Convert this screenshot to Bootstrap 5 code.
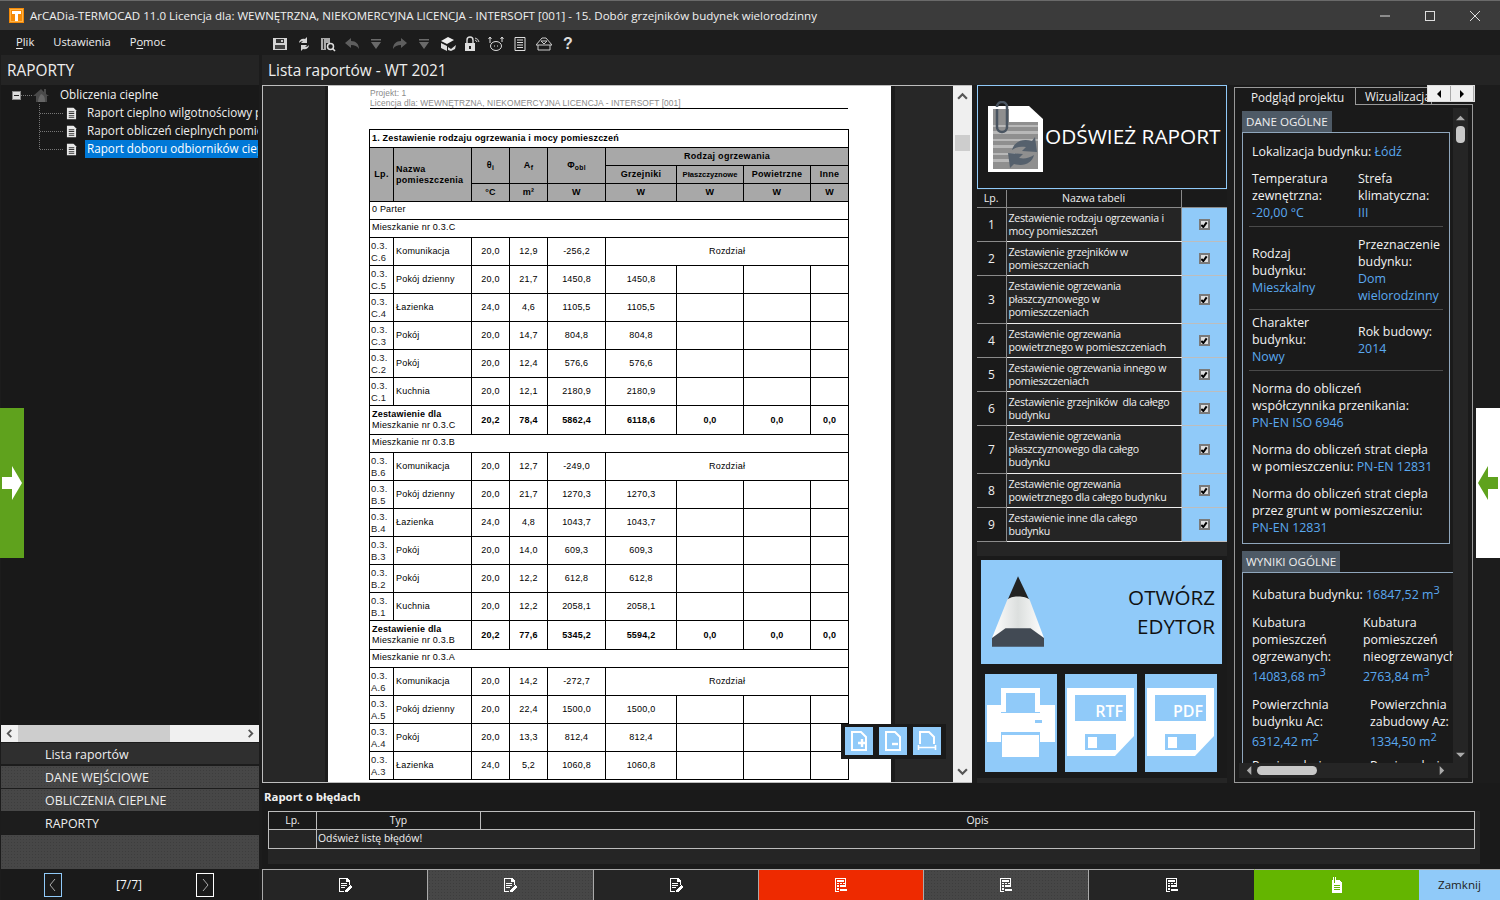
<!DOCTYPE html>
<html lang="pl">
<head>
<meta charset="utf-8">
<title>ArCADia-TERMOCAD</title>
<link href="https://cdn.jsdelivr.net/npm/bootstrap@5.3.0/dist/css/bootstrap.min.css" rel="stylesheet">
<style>
html,body{margin:0;height:100%;overflow:hidden;background:#1a1a1a}
body{font-family:"Open Sans","Noto Sans",sans-serif;font-size:12px;color:#f2f2f2}
.app{width:1500px;height:900px;background:#1c1c1c}
.ttl{height:30px;background:#3b3b3b;border-top:1px solid #6a6a6a;padding-right:3px}
.ttl-txt{margin-left:6px;font-size:11.56px;color:#f0f0f0}
.logo{width:15px;height:15px;margin-left:9px}
.winbtn{width:45px;height:29px}
.mnu{height:25px;background:#1c1c1c}
.mnu-items{width:268px;padding-left:16px;gap:19px;font-size:11.2px;color:#eee}
.mnu-items u{text-underline-offset:2px}
.tool-bar{padding-top:2px}
.tool-i{width:24px;height:24px}
.tool-i svg{width:16px;height:16px}
.qmark{font:700 16px "Liberation Sans",sans-serif;color:#ddd}
.lft{width:259px;padding-left:1px}
.lft>*{flex:none}
.sect-h{height:30px;font-size:15.4px;background:#242424;padding:1px 0 0 6px;color:#eee}
.main-h{height:30px;font-size:15.4px;background:#242424;padding:1px 0 0 6px;color:#eee}
.tree{height:640px;background:#191919;padding-top:1px;font-size:11.7px;overflow:hidden}
.tree-row{height:18px;white-space:nowrap;position:relative}
.tree-exp{width:9px;height:9px;background:#ddd;border:1px solid #888;margin-left:11px;position:relative;flex:none}
.tree-exp::after{content:"";position:absolute;left:1px;right:1px;top:3px;height:1px;background:#222}
.tree-dots{width:11px;border-top:1px dotted #777;flex:none}
.tree-home{width:18px;height:16px;flex:none;margin-right:10px}
.tree-kids{margin:0 0 0 38px;padding:0;list-style:none;border-left:1px dotted #777;height:45px;overflow:visible}
.tree-kid{height:18px;width:218px;white-space:nowrap;overflow:hidden}
.tree-kid .tree-dots{width:23px}
.tree-doc{width:11px;height:13px;flex:none;margin:0 8px 0 3px}
.tree-lbl{padding:0 2px;height:18px;line-height:17px;flex-grow:1;overflow:hidden;color:#eee}
.tree-sel{background:#0078d7;color:#fff}
.hsc{height:17px;background:#f0f0f0;color:#555}
.hsc-th{width:152px;height:17px;background:#cdcdcd;margin-left:17px}
.hsc svg{width:9px;height:9px;flex:none}
.acc{height:23px;padding:2px 0 0 44px;font-size:12.4px;color:#eee}
.acc1{background:#2f2f2f;margin-top:1px;height:21px;margin-bottom:2px;padding-top:3px}
.acc-g{height:22px;margin-bottom:1px}
.tex{background-color:#474747;background-image:radial-gradient(#3d3d3d 30%,transparent 35%);background-size:3px 3px}
.acc3{background:#1d1d1d;height:22px;margin-bottom:1px}
.acc-rest{height:34px}
.pager{height:31px;font-size:12px;padding-left:43px;padding-right:45px;background:#1a1a1a}
.pg-b{width:18px;height:24px;border:1px solid #fff;padding:0;background:none;border-radius:0}
.pg-prev{border-color:#90caf9}
.mainc{width:1238px;margin-left:3px}
.mainc>*{flex:none}
.wrk{height:698px}
.view{width:710px;background:#272727;border:solid #bdbdbd;border-width:1px 0 1px 1px}
.gut1{width:65px;flex:none;border-right:3px solid #1c1c1c;background:#272727}
.gut2{width:62px;flex:none;border-left:4px solid #1c1c1c;background:#272727}
.page{width:563px;flex:none;background:#fff;color:#000;padding:2px 0 0 42px;overflow:hidden;font-family:"Liberation Sans",sans-serif;font-size:9px}
.pg-h{width:478px;height:21px;border-bottom:1px solid #000;color:#8a8a8a;font-size:8.4px;line-height:10px;letter-spacing:.1px;margin-bottom:20px;white-space:nowrap}
.rpt{width:479px;table-layout:fixed;border-collapse:collapse;font-size:9px;letter-spacing:.2px;line-height:11px;margin:0 0 0 -1px;--bs-table-bg:#fff;--bs-table-color:#000;--bs-table-border-color:#000}
.rpt td,.rpt th{padding:0 2px;border:1px solid #000;height:18px;vertical-align:middle;font-weight:400;background:#fff;color:#000;overflow:hidden}
.rpt .gh{background:#a8a8a8;text-align:center;font-weight:700;letter-spacing:.3px}
.rpt .gh-l{text-align:left}
.rpt .t1{font-weight:700;letter-spacing:.2px}
.rpt td.lbl{padding-bottom:3px}
.rpt .rr td{height:28px;text-align:center}
.rpt .rr td:nth-child(1),.rpt .rr td:nth-child(2){text-align:left}
.rpt .rr td:nth-child(1){font-size:9.4px;line-height:12px;color:#222;padding:0 1px}
.rpt .sm td{height:29px;font-weight:700}
.rpt .sm td:nth-child(2){text-align:center}
.rpt .sm td.lab{line-height:11px;padding:0 2px;font-size:9px;color:#000}
.rpt .sm .lab span{font-weight:400;display:block}
.rpt .tiny{font-size:7.6px;letter-spacing:0;padding:0}
.c1{width:24px}.c2{width:78px}.c3,.c4{width:38px}.c5{width:58px}.c6{width:71px}.c7,.c8{width:67px}.c9{width:38px}
.vsc{width:19px;flex:none;background:#efefef;color:#555}
.vsc svg{width:11px;height:11px;margin:5px auto;display:block;flex:none}
.vsc-th{height:16px;margin:28px 2px 0;background:#cdcdcd;flex:none}
.float{left:578px;top:638px;width:105px;height:35px;background:#1a1a1a;padding:3px 5px 4px 4px;gap:6px}
.float .fb{width:28px;height:28px;background:#90caf9;padding:0;border:0;border-radius:0}
.float svg{width:20px;height:20px}
.mid{width:250px;margin-left:5px;background:#252525}
.mid>*{flex:none}
.refr{height:104px;background:#1a1a1a;border:1px solid #90caf9;border-radius:0;color:#fff;padding:0 0 0 10px;font-size:20.8px;white-space:nowrap;gap:1px;margin-bottom:1px}
.refr svg{width:56px;height:71px;flex:none;margin-top:-1px}
.tb{width:250px;table-layout:fixed;border-collapse:collapse;margin:0;font-size:10.6px;letter-spacing:-.25px;line-height:13px;--bs-table-bg:#252525;--bs-table-color:#f0f0f0}
.tb td,.tb th{padding:1px 2px 0;border:1px solid #bdbdbd;background:#252525;color:#f0f0f0;font-weight:400;vertical-align:middle}
.tb th{background:#1a1a1a;text-align:center;height:17px;border-color:#8a8a8a;border-top:0;letter-spacing:0}
.tb td.n{text-align:center;background:#1a1a1a;font-size:12px;border-color:#8a8a8a}
.tb td.k{background:#90caf9;text-align:center;padding:0}
.tb td.nm{border-color:#eee #8a8a8a}
.tb tbody tr{height:34px}
.tb tbody tr.r3{height:48px}
.tb th:first-child,.tb td:first-child{border-left:0}
.tb th:last-child,.tb td:last-child{border-right:0}
.m1{width:29px}.m2{width:175px}.m3{width:46px}
.ck{width:11px;height:11px;margin:4px 0 0;background:#dedede url("data:image/svg+xml,%3Csvg xmlns='http://www.w3.org/2000/svg' viewBox='0 0 12 12'%3E%3Cpath d='M2 6l3 3 5-7' fill='none' stroke='%23000' stroke-width='3'/%3E%3C/svg%3E") center/8px no-repeat;border:2px solid #7a7a7a;border-radius:0;appearance:none;display:inline-block;box-sizing:border-box}
.opn{height:222px;margin-top:14px;background:#1a1a1a;padding:4px 5px 6px 4px}
.opn-e{height:104px;background:#90caf9;border:0;border-radius:0;color:#111;font-size:20.6px;line-height:29px;padding:0 7px 0 11px;width:241px;text-align:right}
.opn-e svg{width:52px;height:72px;flex:none}
.opn-s{margin-top:10px;gap:8px;padding-left:4px}
.opn-b{width:72px;height:98px;background:#90caf9;border:0;border-radius:0;padding:0}
.opn-b svg{width:72px;height:70px}
.rgt{width:239px;margin-left:7px;position:relative;background:#1a1a1a}
.tabsr{height:19px;margin:0;padding:0;border:0;flex-wrap:nowrap}
.tabsr .nav-link{font-size:11.7px;color:#f0f0f0;padding:0 0 0 16px;border:1px solid #999;border-bottom:0;border-radius:0;height:18px;width:122px;text-align:left;background:#1a1a1a;line-height:14px;white-space:nowrap;margin:2px 0 0;position:relative;z-index:1}
.tabsr .nav-link.active{color:#f0f0f0;background:#1a1a1a;border-color:#999}
.tabsr .nav-item:last-child .nav-link{width:76px;padding-left:9px;height:17px;border-left:0}
.tab-arr{right:-2px;top:0;width:48px;height:17px;background:#f0f0f0;color:#000;border:1px solid #ddd;z-index:2}
.tab-arr svg{width:8px;height:8px}
.tab-arr span{flex:1 1 0;height:100%;border-right:1px solid #aaa}
.rbox{height:679px;border:1px solid #999;padding:3px 4px 4px 4px}
.rin{height:670px;overflow:hidden;background:#252525}
.rtop{height:655px}
.rsc{flex:none;width:214px;overflow:hidden;background:#1a1a1a;padding:3px 0 0 3px;font-size:12.4px;line-height:17px;color:#f2f2f2;white-space:nowrap}
.bl{color:#5aa9f0}
.tagg{background:#4e5a66;display:inline-block;padding:0 4px;height:21px;line-height:21px;font-size:11.6px;color:#eee;vertical-align:top}
.gbox{width:208px;height:412px;border:1px solid #8fa6bc;padding:10px 6px 0 9px;margin-bottom:7px}
.gbox2{width:220px;height:200px;border:1px solid #8fa6bc;border-right:0;padding:13px 0 0 9px}
.gbox2 sup{font-size:11px;top:-.5em;line-height:0}
.sl{display:block;margin-top:3px}
.gc{width:106px;flex:none}
.gc2{width:111px;flex:none}
.gc3{width:118px;flex:none}
.gsep{border-top:1px solid #4a4a4a;margin:5px 0 0 -3px;width:194px}
.g4{margin-top:4px}.g7{margin-top:7px}.g9{margin-top:9px}.g10{margin-top:10px}.g11{margin-top:11px}
.rvs{width:15px;flex:none;background:#252525;color:#aaa}
.rvs svg{width:9px;height:9px;margin:6px auto 0;display:block;flex:none}
.rvs-th{width:9px;height:17px;background:#c8c8c8;border-radius:4px;margin:3px auto 0;flex:none}
.rhs{height:15px;background:#252525;padding:0 6px;color:#aaa}
.rhs svg{width:9px;height:9px;flex:none}
.rhs-th{width:60px;height:9px;border-radius:5px;background:#c8c8c8;margin-left:3px;flex:none}
.err{height:86px;background:#1a1a1a;padding:7px 0 0 2px;width:1238px}
.err-t{font-size:11.4px;font-weight:700;height:21px;line-height:14px;color:#f0f0f0}
.err-b{background:#252525;margin-left:4px;width:1212px;height:53px;padding:0}
.et{width:1207px;table-layout:fixed;border-collapse:collapse;font-size:10.4px;margin:0;--bs-table-bg:#1a1a1a;--bs-table-color:#f0f0f0}
.et th,.et td{padding:0 1px;border:1px solid #bdbdbd;height:18px;font-weight:400;text-align:center;background:#1a1a1a;color:#f0f0f0;vertical-align:middle}
.et td{text-align:left;height:19px;background:#252525}
.e1{width:48px}.e2{width:164px}
.tabs{height:31px;background:#1a1a1a}
.tb-i{height:31px;flex:1 1 0;border:solid #aaa;border-width:1px 0 0 1px;border-radius:0;padding:0;background:#252525;color:#fff}
.tb-i svg{width:16px;height:16px;shape-rendering:crispEdges}
.tb-i.tex{background-color:#474747;background-image:radial-gradient(#3d3d3d 30%,transparent 35%);background-size:3px 3px}
.tb-r{background:#ee2a00}
.tb-n{background:#64b500;border-left-color:#64b500}
.tb-z{width:81px;background:#90caf9;color:#222;font-size:11.6px;border:0;border-top:1px solid #aaa;border-radius:0;padding:0;flex:none}
.side{position:absolute;top:408px;width:24px;height:150px}
.side-l{left:0;background:#5fa21d}
.side-r{right:0;background:#fff}
.side svg{width:20px;height:34px}
</style>
</head>
<body>
<svg width="0" height="0" class="position-absolute">
<defs>
<symbol id="i-pen-doc" viewBox="0 0 16 16"><path d="M2 1h8l3 3v4h-1V5H9V2H3v12h4v1H2z" fill="#fff"/><path d="M4 6h6v1H4zM4 8h6v1H4zM4 10h4v1H4z" fill="#fff"/><path d="M8 13l5-5 2 2-5 5H8z" fill="#fff"/></symbol>
<symbol id="i-calc" viewBox="0 0 16 16"><path d="M2 1h11v7h-1V2H3v12h3v1H2z" fill="#fff"/><path d="M4 3h7v2H4zM4 6h2v1H4zM7 6h2v1H7zM10 6h2v1h-2zM4 8h2v2H4zM4 11h2v2H4z" fill="#fff"/><path d="M7 8h5l1 1-1 1H7zM7 12h6l2 1-2 1H7z" fill="#fff"/></symbol>
<symbol id="i-clip" viewBox="0 0 16 16"><path d="M3 3h1V0h3v3h3l3 3v10H3z" fill="#fff"/><path d="M5 0v6h1V0z" fill="#64b500"/><path d="M5 8h6v1H5zM5 10h6v1H5zM5 12h6v1H5z" fill="#64b500"/></symbol>
<symbol id="i-tdoc" viewBox="0 0 12 13"><path d="M1 0h7l3 3v10H1z" fill="#e8e8e8"/><path d="M3 4h6v1H3zM3 6h6v1H3zM3 8h6v1H3zM3 10h6v1H3z" fill="#333"/></symbol>
</defs>
</svg>
<div class="app position-relative d-flex flex-column">
  <header class="ttl d-flex align-items-center flex-shrink-0">
    <svg class="logo" viewBox="0 0 15 15"><rect width="15" height="15" fill="#f58a07"/><rect x="1.5" y="1.5" width="12" height="12" fill="none" stroke="#ffb347"/><path d="M3 3h9v3H9v7H6V6H3z" fill="#fff"/></svg>
    <span class="ttl-txt flex-grow-1">ArCADia-TERMOCAD 11.0 Licencja dla: WEWNĘTRZNA, NIEKOMERCYJNA LICENCJA - INTERSOFT [001] - 15. Dobór grzejników budynek wielorodzinny</span>
    <span class="winbtn d-flex align-items-center justify-content-center"><svg width="12" height="12"><path d="M1 6h10" stroke="#ddd"/></svg></span>
    <span class="winbtn d-flex align-items-center justify-content-center"><svg width="12" height="12"><rect x="1.5" y="1.5" width="9" height="9" fill="none" stroke="#ddd"/></svg></span>
    <span class="winbtn d-flex align-items-center justify-content-center"><svg width="12" height="12"><path d="M1 1l10 10M11 1L1 11" stroke="#ddd"/></svg></span>
  </header>
  <div class="mnu d-flex align-items-center flex-shrink-0">
    <div class="mnu-items d-flex">
      <span><u>P</u>lik</span><span>Ustawienia</span><span>P<u>o</u>moc</span>
    </div>
    <div class="tool-bar d-flex align-items-center">
      <span class="tool-i d-flex align-items-center justify-content-center"><svg viewBox="0 0 16 16"><path d="M1 2h14v12H1z" fill="#d4d4d4"/><path d="M4 3h8v4H4z" fill="#333"/><path d="M3 9h10v4H3z" fill="#444"/><path d="M9 4h2v2H9z" fill="#ccc"/></svg></span>
      <span class="tool-i d-flex align-items-center justify-content-center"><svg viewBox="0 0 16 16"><path d="M3 7c0-3 3-5 6-4l2-2v6H5l2-2c-2 0-3 1-4 2zM13 9c0 3-3 5-6 4l-2 2V9h6l-2 2c2 0 3-1 4-2z" fill="#d4d4d4"/></svg></span>
      <span class="tool-i d-flex align-items-center justify-content-center"><svg viewBox="0 0 16 16"><path d="M1 2h9v5H6v7H1z" fill="#aaa"/><path d="M3 3h1v10H3z" fill="#333"/><circle cx="10.500" cy="10.500" r="3" fill="none" stroke="#ddd" stroke-width="1.5"/><path d="M12.500 12.500l2.500 2.500" stroke="#ddd" stroke-width="1.6"/></svg></span>
      <span class="tool-i d-flex align-items-center justify-content-center"><svg viewBox="0 0 16 16"><path d="M1 7l6-5v3c5 0 8 3 8 8-2-3-4-4-8-4v3z" fill="#5e5e5e"/></svg></span>
      <span class="tool-i d-flex align-items-center justify-content-center"><svg viewBox="0 0 16 16"><path d="M3 3h10v1.500H3zM3 6h10l-5 7z" fill="#6a6a6a"/></svg></span>
      <span class="tool-i d-flex align-items-center justify-content-center"><svg viewBox="0 0 16 16"><path d="M15 7L9 2v3c-5 0-8 3-8 8 2-3 4-4 8-4v3z" fill="#5e5e5e"/></svg></span>
      <span class="tool-i d-flex align-items-center justify-content-center"><svg viewBox="0 0 16 16"><path d="M3 3h10v1.500H3zM3 6h10l-5 7z" fill="#6a6a6a"/></svg></span>
      <span class="tool-i d-flex align-items-center justify-content-center"><svg viewBox="0 0 16 16"><path d="M1 5l7-4 6 3-7 4z" fill="#eee"/><path d="M1 7l6 3v5l-6-3z" fill="#ddd"/><path d="M8 11l3 2 5-4-1 4-4 2-3-1z" fill="#ddd"/></svg></span>
      <span class="tool-i d-flex align-items-center justify-content-center"><svg viewBox="0 0 16 16"><path d="M3 7V4a3 3 0 0 1 6 0v3" fill="none" stroke="#ddd" stroke-width="1.4"/><path d="M1 7h10v8H1z" fill="#ddd"/><path d="M5 10h2v3H5z" fill="#222"/><path d="M11 2a5 5 0 0 1 4 4M11 4a3 3 0 0 1 2 2" fill="none" stroke="#ccc"/></svg></span>
      <span class="tool-i d-flex align-items-center justify-content-center"><svg viewBox="0 0 16 16"><ellipse cx="8" cy="10" rx="5.500" ry="4.500" fill="none" stroke="#ddd"/><path d="M6 10h1M9 10h1M2 1v6M2 1L.5 3M2 1l1.500 2M14 1v5M14 1l-1.500 2M14 1l1.500 2" stroke="#ddd"/></svg></span>
      <span class="tool-i d-flex align-items-center justify-content-center"><svg viewBox="0 0 16 16"><path d="M3 1.500h10v13H3zM5 4h6M5 6.500h6M5 9h6M5 11.500h6M6 1v1M10 1v1" fill="none" stroke="#ddd"/></svg></span>
      <span class="tool-i d-flex align-items-center justify-content-center"><svg viewBox="0 0 16 16"><path d="M0 9l6-7h4l6 7zM2 9v5h12V9M5 5h6l-3 3z" fill="none" stroke="#ccc"/></svg></span>
      <span class="tool-i d-flex align-items-center justify-content-center qmark">?</span>
    </div>
  </div>

  <div class="d-flex flex-grow-1 overflow-hidden">
    <aside class="lft d-flex flex-column flex-shrink-0">
      <div class="sect-h d-flex align-items-center">RAPORTY</div>
      <div class="tree">
        <div class="tree-row d-flex align-items-center">
          <span class="tree-exp"></span><span class="tree-dots"></span>
          <svg class="tree-home" viewBox="0 0 18 16"><path d="M1 9l8-7 3 3V2h2v5l3 2-2 0v6H4V9z" fill="#4a4a4a"/><path d="M9 7c3 1 4 3 4 8H6c0-3 1-5 3-8z" fill="#666"/></svg>
          <span>Obliczenia cieplne</span>
        </div>
        <ul class="tree-kids">
          <li class="tree-kid d-flex align-items-center"><span class="tree-dots"></span><svg class="tree-doc" viewBox="0 0 12 13"><use href="#i-tdoc"/></svg><span class="tree-lbl">Raport cieplno wilgotnościowy przegród</span></li>
          <li class="tree-kid d-flex align-items-center"><span class="tree-dots"></span><svg class="tree-doc" viewBox="0 0 12 13"><use href="#i-tdoc"/></svg><span class="tree-lbl">Raport obliczeń cieplnych pomieszczeń</span></li>
          <li class="tree-kid d-flex align-items-center"><span class="tree-dots"></span><svg class="tree-doc" viewBox="0 0 12 13"><use href="#i-tdoc"/></svg><span class="tree-lbl tree-sel">Raport doboru odbiorników ciepła</span></li>
        </ul>
      </div>
      <div class="hsc d-flex align-items-center position-relative">
        <span class="hsc-th"></span>
        <svg class="position-absolute start-0 ms-1" viewBox="0 0 10 10"><path d="M7 1L3 5l4 4" fill="none" stroke="#555" stroke-width="2"/></svg>
        <svg class="position-absolute end-0 me-1" viewBox="0 0 10 10"><path d="M3 1l4 4-4 4" fill="none" stroke="#555" stroke-width="2"/></svg>
      </div>
      <div class="acc acc1 d-flex align-items-center">Lista raportów</div>
      <div class="acc acc-g tex d-flex align-items-center">DANE WEJŚCIOWE</div>
      <div class="acc acc-g tex d-flex align-items-center">OBLICZENIA CIEPLNE</div>
      <div class="acc acc3 d-flex align-items-center">RAPORTY</div>
      <div class="acc-rest tex"></div>
      <div class="pager d-flex align-items-center justify-content-between">
        <button class="btn pg-b pg-prev d-flex align-items-center justify-content-center"><svg width="8" height="14" viewBox="0 0 8 14"><path d="M6 1L1 7l5 6" fill="none" stroke="#aaa"/></svg></button>
        <span class="text-light">[7/7]</span>
        <button class="btn pg-b d-flex align-items-center justify-content-center"><svg width="8" height="14" viewBox="0 0 8 14"><path d="M2 1l5 6-5 6" fill="none" stroke="#aaa"/></svg></button>
      </div>
    </aside>

    <main class="mainc d-flex flex-column flex-shrink-0">
      <div class="main-h d-flex align-items-center">Lista raportów - WT 2021</div>
      <div class="wrk d-flex">
        <section class="view d-flex position-relative overflow-hidden flex-shrink-0">
          <div class="gut1"></div>
          <div class="page">
            <div class="pg-h">Projekt: 1<br>Licencja dla: WEWNĘTRZNA, NIEKOMERCYJNA LICENCJA - INTERSOFT [001]</div>
            <table class="table rpt">
              <colgroup><col class="c1"><col class="c2"><col class="c3"><col class="c4"><col class="c5"><col class="c6"><col class="c7"><col class="c8"><col class="c9"></colgroup>
              <tbody>
                <tr><td colspan="9" class="t1">1. Zestawienie rodzaju ogrzewania i mocy pomieszczeń</td></tr>
                <tr><td rowspan="3" class="gh">Lp.</td><td rowspan="3" class="gh gh-l">Nazwa pomieszczenia</td><td rowspan="2" class="gh">θ<sub>i</sub></td><td rowspan="2" class="gh">A<sub>f</sub></td><td rowspan="2" class="gh">Φ<sub>obl</sub></td><td colspan="4" class="gh">Rodzaj ogrzewania</td></tr>
                <tr><td class="gh">Grzejniki</td><td class="gh tiny">Płaszczyznowe</td><td class="gh">Powietrzne</td><td class="gh">Inne</td></tr>
                <tr><td class="gh">°C</td><td class="gh">m²</td><td class="gh">W</td><td class="gh">W</td><td class="gh">W</td><td class="gh">W</td><td class="gh">W</td></tr>
                <tr><td colspan="9" class="lbl">0 Parter</td></tr>
                <tr><td colspan="9" class="lbl">Mieszkanie nr 0.3.C</td></tr>
                <tr class="rr"><td>0.3.<br>C.6</td><td>Komunikacja</td><td>20,0</td><td>12,9</td><td>-256,2</td><td colspan="4">Rozdział</td></tr>
                <tr class="rr"><td>0.3.<br>C.5</td><td>Pokój dzienny</td><td>20,0</td><td>21,7</td><td>1450,8</td><td>1450,8</td><td></td><td></td><td></td></tr>
                <tr class="rr"><td>0.3.<br>C.4</td><td>Łazienka</td><td>24,0</td><td>4,6</td><td>1105,5</td><td>1105,5</td><td></td><td></td><td></td></tr>
                <tr class="rr"><td>0.3.<br>C.3</td><td>Pokój</td><td>20,0</td><td>14,7</td><td>804,8</td><td>804,8</td><td></td><td></td><td></td></tr>
                <tr class="rr"><td>0.3.<br>C.2</td><td>Pokój</td><td>20,0</td><td>12,4</td><td>576,6</td><td>576,6</td><td></td><td></td><td></td></tr>
                <tr class="rr"><td>0.3.<br>C.1</td><td>Kuchnia</td><td>20,0</td><td>12,1</td><td>2180,9</td><td>2180,9</td><td></td><td></td><td></td></tr>
                <tr class="rr sm"><td colspan="2" class="lab">Zestawienie dla<span>Mieszkanie nr 0.3.C</span></td><td>20,2</td><td>78,4</td><td>5862,4</td><td>6118,6</td><td>0,0</td><td>0,0</td><td>0,0</td></tr>
                <tr><td colspan="9" class="lbl">Mieszkanie nr 0.3.B</td></tr>
                <tr class="rr"><td>0.3.<br>B.6</td><td>Komunikacja</td><td>20,0</td><td>12,7</td><td>-249,0</td><td colspan="4">Rozdział</td></tr>
                <tr class="rr"><td>0.3.<br>B.5</td><td>Pokój dzienny</td><td>20,0</td><td>21,7</td><td>1270,3</td><td>1270,3</td><td></td><td></td><td></td></tr>
                <tr class="rr"><td>0.3.<br>B.4</td><td>Łazienka</td><td>24,0</td><td>4,8</td><td>1043,7</td><td>1043,7</td><td></td><td></td><td></td></tr>
                <tr class="rr"><td>0.3.<br>B.3</td><td>Pokój</td><td>20,0</td><td>14,0</td><td>609,3</td><td>609,3</td><td></td><td></td><td></td></tr>
                <tr class="rr"><td>0.3.<br>B.2</td><td>Pokój</td><td>20,0</td><td>12,2</td><td>612,8</td><td>612,8</td><td></td><td></td><td></td></tr>
                <tr class="rr"><td>0.3.<br>B.1</td><td>Kuchnia</td><td>20,0</td><td>12,2</td><td>2058,1</td><td>2058,1</td><td></td><td></td><td></td></tr>
                <tr class="rr sm"><td colspan="2" class="lab">Zestawienie dla<span>Mieszkanie nr 0.3.B</span></td><td>20,2</td><td>77,6</td><td>5345,2</td><td>5594,2</td><td>0,0</td><td>0,0</td><td>0,0</td></tr>
                <tr><td colspan="9" class="lbl">Mieszkanie nr 0.3.A</td></tr>
                <tr class="rr"><td>0.3.<br>A.6</td><td>Komunikacja</td><td>20,0</td><td>14,2</td><td>-272,7</td><td colspan="4">Rozdział</td></tr>
                <tr class="rr"><td>0.3.<br>A.5</td><td>Pokój dzienny</td><td>20,0</td><td>22,4</td><td>1500,0</td><td>1500,0</td><td></td><td></td><td></td></tr>
                <tr class="rr"><td>0.3.<br>A.4</td><td>Pokój</td><td>20,0</td><td>13,3</td><td>812,4</td><td>812,4</td><td></td><td></td><td></td></tr>
                <tr class="rr"><td>0.3.<br>A.3</td><td>Łazienka</td><td>24,0</td><td>5,2</td><td>1060,8</td><td>1060,8</td><td></td><td></td><td></td></tr>
              </tbody>
            </table>
          </div>
          <div class="gut2"></div>
          <div class="vsc d-flex flex-column">
            <svg viewBox="0 0 10 10"><path d="M1 7l4-4 4 4" fill="none" stroke="#555" stroke-width="2"/></svg>
            <div class="vsc-th"></div>
            <div class="flex-grow-1"></div>
            <svg viewBox="0 0 10 10"><path d="M1 3l4 4 4-4" fill="none" stroke="#555" stroke-width="2"/></svg>
          </div>
          <div class="float position-absolute d-flex">
            <button class="btn fb d-flex align-items-center justify-content-center"><svg viewBox="0 0 20 20"><path d="M3 1h9l5 5v13H3z" fill="none" stroke="#fff" stroke-width="2"/><path d="M9 12h8M13 8v8" stroke="#fff" stroke-width="2.400"/></svg></button>
            <button class="btn fb d-flex align-items-center justify-content-center"><svg viewBox="0 0 20 20"><path d="M3 1h9l5 5v13H3z" fill="none" stroke="#fff" stroke-width="2"/><path d="M9 13h6" stroke="#fff" stroke-width="2.400"/></svg></button>
            <button class="btn fb d-flex align-items-center justify-content-center"><svg viewBox="0 0 20 20"><path d="M3 13V1h9l5 5v7" fill="none" stroke="#fff" stroke-width="2"/><path d="M1 16.500h18M1.500 14v5M18.500 14v5" stroke="#fff" stroke-width="1.600"/></svg></button>
          </div>
        </section>

        <section class="mid d-flex flex-column flex-shrink-0">
          <button class="btn refr d-flex align-items-center">
            <svg viewBox="0 0 56 71"><path d="M0 5h41l14 13v53H0z" fill="#fff"/><path d="M5 8h16v13h29v47H5z" fill="#8f8f8f"/><path d="M5 24h45v2H5zM5 30h45v3H5zM5 38h45v2H5zM5 44h22v3H5zM5 52h22v2H5zM5 58h22v3H5z" fill="#b8b8b8"/><path d="M9 8v18a5 5 0 0 0 10 0V6a5 5 0 0 0-10 0" fill="none" stroke="#4a5561" stroke-width="2.500"/><g transform="translate(0 7)"><path d="M24 42c2-8 10-12 20-9l3-4 2 15-15-1 4-4c-6-1-10 0-14 3zM46 47c-2 8-10 12-20 9l-4 4-2-15 15 1-4 4c6 1 10 0 15-3z" fill="#56616d"/></g></svg>
            <span>ODŚWIEŻ RAPORT</span>
          </button>
          <table class="table tb">
            <colgroup><col class="m1"><col class="m2"><col class="m3"></colgroup>
            <thead><tr><th>Lp.</th><th>Nazwa tabeli</th><th></th></tr></thead>
            <tbody>
              <tr><td class="n">1</td><td class="nm">Zestawienie rodzaju ogrzewania i mocy pomieszczeń</td><td class="k"><input class="ck" type="checkbox" checked aria-label="1"></td></tr>
              <tr><td class="n">2</td><td class="nm">Zestawienie grzejników w pomieszczeniach</td><td class="k"><input class="ck" type="checkbox" checked aria-label="2"></td></tr>
              <tr class="r3"><td class="n">3</td><td class="nm">Zestawienie ogrzewania płaszczyznowego w pomieszczeniach</td><td class="k"><input class="ck" type="checkbox" checked aria-label="3"></td></tr>
              <tr><td class="n">4</td><td class="nm">Zestawienie ogrzewania powietrznego w pomieszczeniach</td><td class="k"><input class="ck" type="checkbox" checked aria-label="4"></td></tr>
              <tr><td class="n">5</td><td class="nm">Zestawienie ogrzewania innego w pomieszczeniach</td><td class="k"><input class="ck" type="checkbox" checked aria-label="5"></td></tr>
              <tr><td class="n">6</td><td class="nm">Zestawienie grzejników&nbsp; dla całego budynku</td><td class="k"><input class="ck" type="checkbox" checked aria-label="6"></td></tr>
              <tr class="r3"><td class="n">7</td><td class="nm">Zestawienie ogrzewania płaszczyznowego dla całego budynku</td><td class="k"><input class="ck" type="checkbox" checked aria-label="7"></td></tr>
              <tr><td class="n">8</td><td class="nm">Zestawienie ogrzewania powietrznego dla całego budynku</td><td class="k"><input class="ck" type="checkbox" checked aria-label="8"></td></tr>
              <tr><td class="n">9</td><td class="nm">Zestawienie inne dla całego budynku</td><td class="k"><input class="ck" type="checkbox" checked aria-label="9"></td></tr>
            </tbody>
          </table>
          <div class="opn">
            <button class="btn opn-e d-flex align-items-center justify-content-between">
              <svg viewBox="0 0 54 74"><defs><linearGradient id="pg" x1="0" x2="1"><stop offset="0" stop-color="#fff"/><stop offset=".5" stop-color="#dcdfde"/><stop offset="1" stop-color="#fff"/></linearGradient></defs><path d="M16 25L27 0l12 25z" fill="#222"/><path d="M16 24c3-2 5-3 11-3s9 1 12 3l15 40H0z" fill="url(#pg)"/><path d="M0 64l14-10h26l14 10v9H0z" fill="#424a54"/></svg>
              <span>OTWÓRZ<br>EDYTOR</span>
            </button>
            <div class="opn-s d-flex">
              <button class="btn opn-b d-flex align-items-center justify-content-center"><svg viewBox="0 0 72 70"><path d="M16 0h39v24H50V5H21v19h-5z" fill="#fff"/><path d="M2 17h14v8h39v-8h15v37H55V44H16v10H2z" fill="#fff"/><rect x="17" y="47" width="37" height="22" fill="#fff"/><rect x="50" y="32" width="7" height="3" fill="#90caf9"/></svg></button>
              <button class="btn opn-b d-flex align-items-center justify-content-center"><svg viewBox="0 0 72 70"><path d="M2 0h67v48L50 68H2z" fill="#fff"/><rect x="10" y="7" width="51" height="26" fill="#90caf9"/><text x="58" y="29" text-anchor="end" font-family="Open Sans,sans-serif" font-size="16" font-weight="600" fill="#fff">RTF</text><rect x="20" y="46" width="31" height="16" fill="#90caf9"/><rect x="23" y="49" width="9" height="11" fill="#fff"/></svg></button>
              <button class="btn opn-b d-flex align-items-center justify-content-center"><svg viewBox="0 0 72 70"><path d="M2 0h67v48L50 68H2z" fill="#fff"/><rect x="10" y="7" width="51" height="26" fill="#90caf9"/><text x="58" y="29" text-anchor="end" font-family="Open Sans,sans-serif" font-size="16" font-weight="600" fill="#fff">PDF</text><rect x="20" y="46" width="31" height="16" fill="#90caf9"/><rect x="23" y="49" width="9" height="11" fill="#fff"/></svg></button>
            </div>
          </div>
        </section>

        <section class="rgt flex-shrink-0">
          <ul class="nav nav-tabs tabsr">
            <li class="nav-item"><button class="nav-link active">Podgląd projektu</button></li>
            <li class="nav-item"><button class="nav-link">Wizualizacja</button></li>
          </ul>
          <div class="tab-arr position-absolute d-flex">
            <span class="d-flex align-items-center justify-content-center"><svg viewBox="0 0 8 8"><path d="M6 0L2 4l4 4z"/></svg></span>
            <span class="d-flex align-items-center justify-content-center"><svg viewBox="0 0 8 8"><path d="M2 0l4 4-4 4z"/></svg></span>
          </div>
          <div class="rbox">
            <div class="rin">
              <div class="rtop d-flex">
                <div class="rsc">
                  <div class="tagg">DANE OGÓLNE</div>
                  <div class="gbox">
                    <div>Lokalizacja budynku: <span class="bl">Łódź</span></div>
                    <div class="d-flex g10"><div class="gc">Temperatura<br>zewnętrzna:<br><span class="bl">-20,00 °C</span></div><div>Strefa<br>klimatyczna:<br><span class="bl">III</span></div></div>
                    <div class="gsep"></div>
                    <div class="d-flex align-items-center g9"><div class="gc">Rodzaj<br>budynku:<br><span class="bl">Mieszkalny</span></div><div>Przeznaczenie<br>budynku:<br><span class="bl">Dom<br>wielorodzinny</span></div></div>
                    <div class="gsep"></div>
                    <div class="d-flex align-items-center g4"><div class="gc">Charakter<br>budynku:<br><span class="bl">Nowy</span></div><div>Rok budowy:<br><span class="bl">2014</span></div></div>
                    <div class="gsep"></div>
                    <div class="g9">Norma do obliczeń<br>współczynnika przenikania:<br><span class="bl">PN-EN ISO 6946</span></div>
                    <div class="g10">Norma do obliczeń strat ciepła<br>w pomieszczeniu: <span class="bl">PN-EN 12831</span></div>
                    <div class="g10">Norma do obliczeń strat ciepła<br>przez grunt w pomieszczeniu:<br><span class="bl">PN-EN 12831</span></div>
                  </div>
                  <div class="tagg">WYNIKI OGÓLNE</div>
                  <div class="gbox2">
                    <div>Kubatura budynku: <span class="bl">16847,52 m<sup>3</sup></span></div>
                    <div class="d-flex g11"><div class="gc2">Kubatura<br>pomieszczeń<br>ogrzewanych:<br><span class="bl sl">14083,68 m<sup>3</sup></span></div><div>Kubatura<br>pomieszczeń<br>nieogrzewanych:<br><span class="bl sl">2763,84 m<sup>3</sup></span></div></div>
                    <div class="d-flex g11"><div class="gc3">Powierzchnia<br>budynku Ac:<br><span class="bl sl">6312,42 m<sup>2</sup></span></div><div>Powierzchnia<br>zabudowy Az:<br><span class="bl sl">1334,50 m<sup>2</sup></span></div></div>
                    <div class="d-flex g7"><div class="gc3">Powierzchnia</div><div>Powierzchnia</div></div>
                  </div>
                </div>
                <div class="rvs d-flex flex-column">
                  <svg viewBox="0 0 10 10"><path d="M0 7l5-5 5 5z" fill="#aaa"/></svg>
                  <div class="rvs-th"></div>
                  <div class="flex-grow-1"></div>
                  <svg class="mb-1" viewBox="0 0 10 10"><path d="M0 3l5 5 5-5z" fill="#aaa"/></svg>
                </div>
              </div>
              <div class="rhs d-flex align-items-center">
                <svg viewBox="0 0 10 10"><path d="M7 0L2 5l5 5z" fill="#aaa"/></svg>
                <div class="rhs-th"></div>
                <div class="flex-grow-1"></div>
                <svg class="me-3" viewBox="0 0 10 10"><path d="M3 0l5 5-5 5z" fill="#aaa"/></svg>
              </div>
            </div>
          </div>
        </section>
      </div>

      <section class="err">
        <div class="err-t">Raport o błędach</div>
        <div class="err-b">
          <table class="table et">
            <colgroup><col class="e1"><col class="e2"><col></colgroup>
            <thead><tr><th>Lp.</th><th>Typ</th><th>Opis</th></tr></thead>
            <tbody><tr><td></td><td colspan="2">Odśwież listę błędów!</td></tr></tbody>
          </table>
        </div>
      </section>

      <nav class="tabs d-flex">
        <button class="btn tb-i d-flex align-items-center justify-content-center" aria-label="a"><svg><use href="#i-pen-doc"/></svg></button>
        <button class="btn tb-i tex d-flex align-items-center justify-content-center" aria-label="b"><svg><use href="#i-pen-doc"/></svg></button>
        <button class="btn tb-i d-flex align-items-center justify-content-center" aria-label="c"><svg><use href="#i-pen-doc"/></svg></button>
        <button class="btn tb-i tb-r d-flex align-items-center justify-content-center" aria-label="d"><svg><use href="#i-calc"/></svg></button>
        <button class="btn tb-i tex d-flex align-items-center justify-content-center" aria-label="e"><svg><use href="#i-calc"/></svg></button>
        <button class="btn tb-i d-flex align-items-center justify-content-center" aria-label="f"><svg><use href="#i-calc"/></svg></button>
        <button class="btn tb-i tb-n d-flex align-items-center justify-content-center" aria-label="g"><svg><use href="#i-clip"/></svg></button>
        <button class="btn tb-z">Zamknij</button>
      </nav>
    </main>
  </div>

  <div class="side side-l d-flex align-items-center justify-content-center"><svg viewBox="0 0 20 34"><path d="M0 11h10V0l10 17-10 17V23H0z" fill="#fff"/></svg></div>
  <div class="side side-r d-flex align-items-center justify-content-center"><svg viewBox="0 0 20 34"><path d="M20 11H10V0L0 17l10 17V23h10z" fill="#5fa21d"/></svg></div>
</div>
</body>
</html>
